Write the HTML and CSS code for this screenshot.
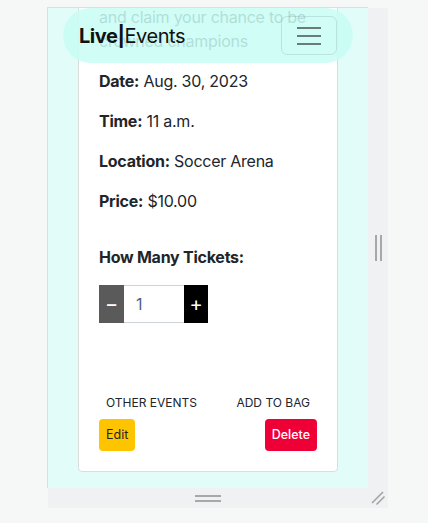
FILE: index.html
```html
<!DOCTYPE html>
<html lang="en">
<head>
<meta charset="utf-8">
<title>Live|Events</title>
<link rel="stylesheet" href="styles.css">
</head>
<body>
<div class="resizer">
  <div class="frame">
    <nav class="navbar">
      <a class="brand" href="#"><b>Live|</b>Events</a>
      <button class="toggler" type="button" aria-label="Toggle navigation">
        <span class="bar"></span><span class="bar"></span><span class="bar"></span>
      </button>
    </nav>
    <div class="card">
      <p class="desc">and claim your chance to be crowned champions</p>
      <p><b>Date:</b> Aug. 30, 2023</p>
      <p><b>Time:</b> 11 a.m.</p>
      <p><b>Location:</b> Soccer Arena</p>
      <p><b>Price:</b> $10.00</p>
      <h5 class="qty-label">How Many Tickets:</h5>
      <div class="qty">
        <button class="qty-btn minus" type="button">&minus;</button>
        <input class="qty-input" type="text" value="1">
        <button class="qty-btn plus" type="button">+</button>
      </div>
      <div class="links">
        <a class="link" href="#">OTHER EVENTS</a>
        <a class="link" href="#">ADD TO BAG</a>
      </div>
      <div class="actions">
        <a class="btn edit" href="#">Edit</a>
        <a class="btn delete" href="#">Delete</a>
      </div>
    </div>
  </div>
  <div class="gutter-right"><span class="vhandle"></span></div>
  <div class="gutter-bottom"><span class="hhandle"></span></div>
  <div class="corner">
    <svg width="20" height="20" viewBox="0 0 20 20">
      <line x1="4" y1="15" x2="15" y2="4" stroke="#a3a3a3" stroke-width="1.6"/>
      <line x1="8.5" y1="16.5" x2="16.5" y2="8.5" stroke="#a3a3a3" stroke-width="1.6"/>
    </svg>
  </div>
</div>
</body>
</html>
```

FILE: styles.css
```css
* { box-sizing: border-box; }

body {
  margin: 0;
  background: #f6f7f7;
  font-family: Inter, "Noto Sans", sans-serif;
  color: #212529;
}

.resizer {
  margin: 7px 0 0 47px;
  display: grid;
  grid-template-columns: 321px 20px;
  grid-template-rows: 481px 20px;
}

.frame {
  position: relative;
  overflow: hidden;
  background: #e2fdf9;
  border-top: 1px solid #dedede;
  border-left: 1px solid #dedede;
}

.gutter-right {
  margin-top: 1px;
  background: #f0f1f2;
  display: flex;
  align-items: center;
  justify-content: center;
}

.vhandle {
  width: 7px;
  height: 26px;
  border-left: 2px solid #a8a8a8;
  border-right: 2px solid #a8a8a8;
}

.gutter-bottom {
  margin-left: 1px;
  background: #f0f1f2;
  display: flex;
  align-items: center;
  justify-content: center;
}

.hhandle {
  width: 26px;
  height: 7px;
  border-top: 2px solid #a8a8a8;
  border-bottom: 2px solid #a8a8a8;
}

.corner {
  background: #f0f1f2;
}

.corner svg { display: block; }

/* navbar overlay */
.navbar {
  position: absolute;
  top: 0;
  left: 15px;
  right: 15px;
  height: 55px;
  border-radius: 28px;
  background: rgba(200, 253, 244, 0.86);
  display: flex;
  align-items: center;
  justify-content: space-between;
  padding: 0 16px;
  z-index: 2;
}

.brand {
  font-size: 20px;
  color: #111;
  text-decoration: none;
  letter-spacing: -0.45px;
}

.brand b { font-weight: 700; }

.toggler {
  width: 56px;
  height: 39px;
  border: 1px solid rgba(0, 0, 0, 0.1);
  border-radius: 6px;
  background: transparent;
  display: flex;
  flex-direction: column;
  align-items: center;
  justify-content: center;
  gap: 6px;
  padding: 0;
}

.bar {
  display: block;
  width: 24px;
  height: 2px;
  background: #6b7b79;
}

/* card */
.card {
  margin: -24px 30px 0;
  background: #fff;
  border: 1px solid #dcdcdc;
  border-radius: 4px;
  padding: 20px 20px 20px;
  letter-spacing: -0.25px;
}

.card p {
  margin: 0 0 16px;
  font-size: 16px;
  line-height: 24px;
}

.card p b { font-weight: 700; }

.qty-label {
  margin: 32px 0 16px;
  font-size: 16px;
  line-height: 24px;
  font-weight: 700;
}

.qty {
  display: flex;
  height: 38px;
  margin-bottom: 64px;
}

.qty-btn {
  width: 25px;
  border: 0;
  padding: 0;
  color: #fff;
  font-family: Inter, sans-serif;
  font-size: 20px;
  line-height: 38px;
}

.minus { background: #5a5a5a; }
.plus { background: #000; width: 24px; }

.qty-input {
  width: 60px;
  border: 1px solid #ced4da;
  border-left: 0;
  border-right: 0;
  padding: 0 12px;
  font-family: Inter, sans-serif;
  font-size: 16px;
  color: #4a6488;
  outline: none;
}

.links {
  display: flex;
  justify-content: space-between;
  height: 32px;
}

.link {
  padding: 0 7px;
  font-size: 12px;
  line-height: 32px;
  color: #212529;
  text-decoration: none;
  letter-spacing: 0;
}

.actions {
  display: flex;
  justify-content: space-between;
}

.btn {
  padding: 0 7px;
  height: 32px;
  line-height: 32px;
  font-size: 12.5px;
  border-radius: 4px;
  text-decoration: none;
  letter-spacing: 0;
}

.edit {
  background: #ffc400;
  color: #212529;
}

.delete {
  background: #ee0037;
  color: #fff;
  font-weight: 500;
}
```
